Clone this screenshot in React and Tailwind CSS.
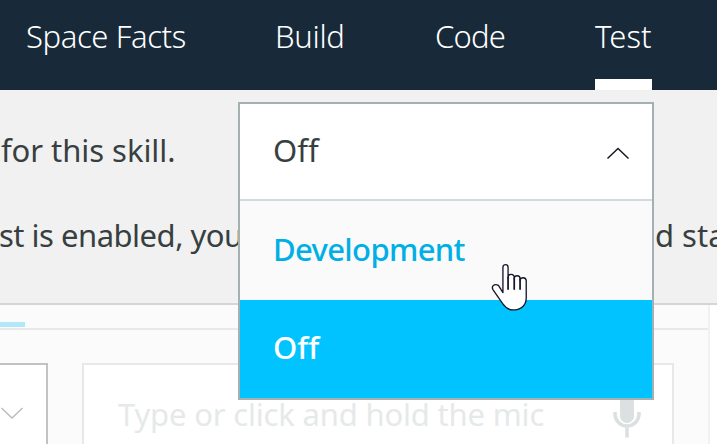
import React from "react";

function NavItem({ label, className }) {
  return (
    <div className={`h-full shrink-0 whitespace-nowrap pt-[16px] ${className}`}>
      <span>{label}</span>
    </div>
  );
}

function Dropdown() {
  return (
    <div className="absolute left-[238px] top-[102px] flex h-[298px] w-[416px] flex-col border-2 border-[#a3b1b2] bg-white text-[31px] leading-[40px]">
      <div className="flex h-[95px] shrink-0 justify-between pl-[33px] pr-[22px] pt-[26px] text-[#373f41]">
        <span className="tracking-[0.1px]">Off</span>
        <svg className="mt-[17px] h-[14px] w-[24px]" viewBox="0 0 24 14" fill="none" stroke="#16191f" strokeWidth="1.5">
          <path d="M1.500 11.500 12 1.500l10.500 10" />
        </svg>
      </div>
      <div className="h-[101px] shrink-0 border-t-2 border-[#d3dadd] bg-[#fafafa] pl-[33px] pt-[28px] font-medium text-[#00afe6]">
        <span className="tracking-[-0.65px]">Development</span>
      </div>
      <div className="h-[98px] shrink-0 bg-[#00c3ff] pl-[33px] pt-[27px] font-medium text-white">
        <span className="tracking-[-0.1px]">Off</span>
      </div>
    </div>
  );
}

function HandCursor() {
  return (
    <svg className="absolute left-[490px] top-[262px] h-[51px] w-[39px]" viewBox="0 0 38 50" preserveAspectRatio="none" fill="white" stroke="#17172b" strokeWidth="1.3" strokeLinejoin="round" strokeLinecap="round">
      <path d="M12.600 30V5.200c0-3.400 5-3.400 5 0V15.500c0-4.500 6-4.500 6 0v1c0-4 5.700-4 5.700 0v1.500c0-3.500 6-3.500 6 0.500v16.500c0 7.500-5 12-12.800 12-4.500 0-7.500-2.500-10-6L3.200 27.500c-2.500-4 1-6.500 5-4.500z" />
      <path d="M17.600 15v11.500M23.600 16v10.500M29.300 17v9.500" fill="none" strokeWidth="1.700" />
    </svg>
  );
}

export default function App() {
  return (
    <div className="relative flex h-[444px] w-[717px] flex-col overflow-hidden bg-[#fbfbfb] font-['Noto_Sans','Open_Sans',sans-serif]">
      <nav className="flex h-[90px] shrink-0 bg-[#182a39] pl-[26px] text-[31px] font-light leading-[40px] text-white">
        <NavItem label="Space Facts" className="w-[249px] tracking-[-0.4px]" />
        <NavItem label="Build" className="w-[160px] tracking-[-0.3px]" />
        <NavItem label="Code" className="w-[160px] tracking-[-0.8px]" />
        <div className="flex h-full w-[57px] flex-col justify-between whitespace-nowrap pt-[16px]">
          <span>Test</span>
          <div className="h-[11px] bg-white" />
        </div>
      </nav>

      <section className="h-[215px] shrink-0 border-b-2 border-[#d5d5d5] bg-[#f1f1f1] pt-[40px] text-[31px] leading-[40px] text-[#373f41]">
        <p className="whitespace-nowrap pl-[1px] tracking-[-0.05px]">for this skill.</p>
        <div className="mt-[45px] flex whitespace-nowrap">
          <p className="-ml-px w-[656px] shrink-0 tracking-[-0.5px]">st is enabled, you</p>
          <p>d sta</p>
        </div>
      </section>

      <main className="flex min-h-0 flex-1">
        <div className="flex w-[710px] shrink-0 flex-col border-r-2 border-[#f1f1f1]">
          <div className="h-[25px] shrink-0 border-b-2 border-[#e9e9e9] pt-[17px]">
            <div className="h-[5px] w-[25px] bg-[#b2e7f9]" />
          </div>
          <div className="flex flex-1 pt-[33px]">
            <div className="w-[48px] border-r-2 border-t-2 border-[#c2c2c2] bg-white pt-[41px]">
              <svg className="h-[14px] w-[24px]" viewBox="0 0 24 14" fill="none" stroke="#b9b9b9" strokeWidth="1.300">
                <path d="M1.500 2 12 12 22.500 2" />
              </svg>
            </div>
            <div className="ml-[34px] flex w-[592px] justify-between border-x-2 border-t-2 border-[#e6e9e9] bg-white pl-[34px] pr-[31px] pt-[29px] text-[31px] leading-[40px] text-[#e6e9e9]">
              <span className="whitespace-nowrap tracking-[-0.18px]">Type or click and hold the mic</span>
              <svg className="h-[45px] w-[28px] shrink-0" viewBox="0 0 28 45" fill="none" stroke="#dce0e0" strokeWidth="3.500">
                <rect x="7" y="0" width="14" height="29" rx="7" fill="#dce0e0" stroke="none" />
                <path d="M2 18v2a12 12 0 0 0 24 0v-2M14 32v11.500" />
              </svg>
            </div>
          </div>
        </div>
        <div className="flex-1 bg-white" />
      </main>

      <Dropdown />
      <HandCursor />
    </div>
  );
}
